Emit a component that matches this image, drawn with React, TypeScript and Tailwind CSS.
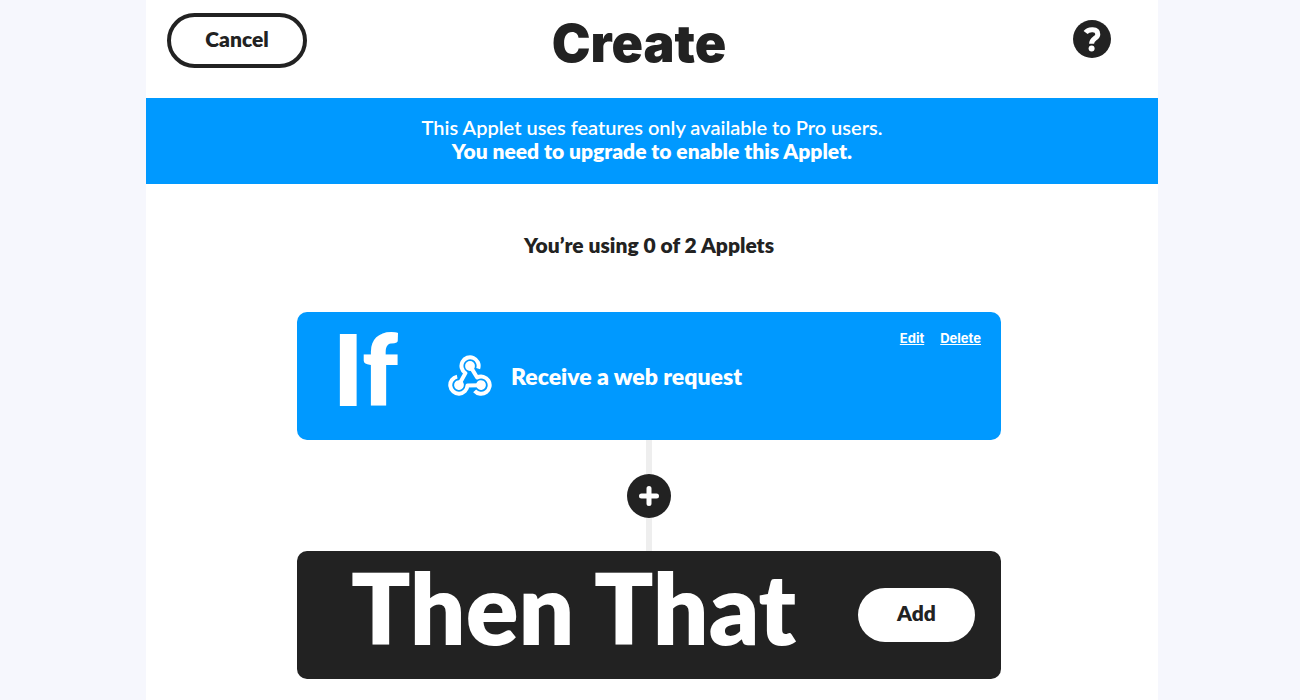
import React from 'react';

function WebhookIcon() {
  return (
    <svg viewBox="0 0 44 42" className="h-[42px] w-11 shrink-0" fill="none" aria-hidden="true">
      {[0, 120, 240].map((angle) => (
        <g key={angle} transform={`rotate(${angle} 22 23.7)`}>
          <circle cx="22" cy="11" r="4.9" fill="white" />
          <path
            d="M30.2 13.6A8.6 8.6 0 1 0 17.4 18.1L11 29.8"
            stroke="white"
            strokeWidth="4"
            strokeLinejoin="round"
          />
        </g>
      ))}
    </svg>
  );
}

function HelpIcon() {
  return (
    <svg viewBox="0 0 38 38" className="size-[38px]" fill="none" aria-hidden="true">
      <circle cx="19" cy="19" r="19" fill="#222222" />
      <path
        d="M12.6 12.6C15.4 8.8 24.8 8.4 24.8 14.2C24.8 18.6 18.6 18.2 18.6 23.8"
        stroke="white"
        strokeWidth="5"
        strokeLinejoin="round"
      />
      <circle cx="18.6" cy="28.6" r="3" fill="white" />
    </svg>
  );
}

function PlusIcon() {
  return (
    <svg viewBox="0 0 44 44" className="size-11" fill="none" aria-hidden="true">
      <path d="M22 14.5V29.5M14.5 22H29.5" stroke="white" strokeWidth="5" strokeLinecap="round" />
    </svg>
  );
}

export default function App() {
  return (
    <div className="min-h-screen bg-[#f6f7fd] pl-1 font-['Lato',sans-serif] text-[#222222]">
      <main className="mx-auto min-h-screen max-w-[1012px] bg-white">
        <header className="grid h-[98px] grid-cols-[1fr_auto_1fr] items-start pt-[13px] pr-[47px] pl-[21px]">
          <button
            type="button"
            className="h-[55px] w-[140px] rounded-full border-4 border-[#222222] pb-1 text-[21px] leading-7 font-extrabold"
          >
            Cancel
          </button>
          <h1 className="font-['Inter',sans-serif] text-[52px] leading-[62px] font-black">Create</h1>
          <button type="button" aria-label="Help" className="mt-[7px] justify-self-end rounded-full">
            <HelpIcon />
          </button>
        </header>

        <div className="bg-[#0099ff] pt-[18px] pb-[22px] text-center text-white">
          <p className="text-xl leading-[23px] font-semibold">This Applet uses features only available to Pro users.</p>
          <p className="text-[21px] leading-[23px] font-extrabold">You need to upgrade to enable this Applet.</p>
        </div>

        <div className="flex flex-col items-center pr-1.5 pb-5">
          <p className="mt-[47px] text-[21px] leading-7 font-extrabold">You’re using 0 of 2 Applets</p>

          <section className="mt-[53px] flex h-32 w-full max-w-[704px] rounded-[10px] bg-[#0099ff] pr-5 pl-9 text-white">
            <h2 className="w-[115px] pt-1 text-[98px] leading-[104px] font-extrabold">If</h2>
            <div className="flex flex-1 items-center gap-[19px]">
              <WebhookIcon />
              <p className="text-[23px] leading-7 font-extrabold">Receive a web request</p>
            </div>
            <nav className="flex gap-4 pt-4 font-['Inter',sans-serif] text-[13px] leading-5 font-bold">
              <a href="#edit" className="underline">Edit</a>
              <a href="#delete" className="underline">Delete</a>
            </nav>
          </section>

          <div className="flex flex-col items-center">
            <div className="h-[34px] w-1.5 bg-[#eeeeee]" />
            <button type="button" aria-label="Add step" className="rounded-full bg-[#222222]">
              <PlusIcon />
            </button>
            <div className="h-[33px] w-1.5 bg-[#eeeeee]" />
          </div>

          <section className="flex h-32 w-full max-w-[704px] items-start justify-between rounded-[10px] bg-[#222222] pr-[26px] pl-[54px] text-white">
            <h2 className="pt-1 text-[98px] leading-[104px] font-extrabold">Then That</h2>
            <button
              type="button"
              className="h-[54px] w-[117px] self-center rounded-full bg-white pb-1 text-[21px] leading-7 font-extrabold text-[#222222]"
            >
              Add
            </button>
          </section>
        </div>
      </main>
    </div>
  );
}
